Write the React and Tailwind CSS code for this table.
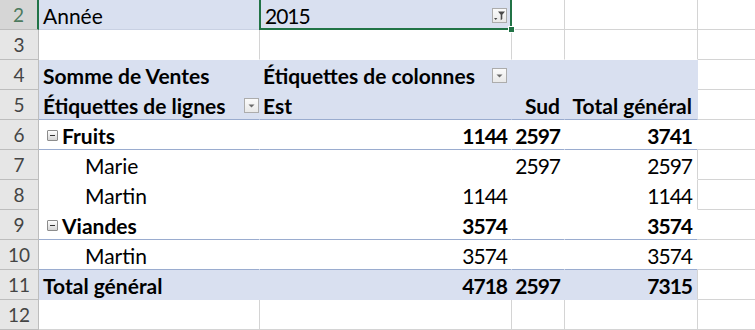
const FONT = { fontFamily: 'Lato, "Liberation Sans", sans-serif' }

function DropButton() {
  return (
    <div className="grid h-[15px] w-[15px] shrink-0 place-items-center border border-[#acacac] bg-gradient-to-b from-[#fbfbfb] to-[#e9e9e9]">
      <svg width="9" height="6" viewBox="0 0 9 6">
        <path d="M1.5 1.5h6l-3 3z" fill="#6b6b6b" />
      </svg>
    </div>
  )
}

function FilterButton() {
  return (
    <div className="grid h-[15px] w-[15px] shrink-0 place-items-center border border-[#acacac] bg-gradient-to-b from-[#fbfbfb] to-[#e9e9e9]">
      <svg width="13" height="13" viewBox="0 0 13 13">
        <path d="M5 2.5h7l-2.7 3.2v4.3l-1.6 1.3v-5.6z" fill="#4a4a4a" />
        <path d="M1 9h3.4l-1.7 2z" fill="#4a4a4a" />
      </svg>
    </div>
  )
}

function Collapse() {
  return (
    <div className="mr-[4px] grid h-[11px] w-[11px] shrink-0 place-items-center rounded-[1px] border border-[#8c8c8c] bg-gradient-to-b from-[#ffffff] to-[#d6d6d6]">
      <div className="h-[1px] w-[5px] bg-[#333]" />
    </div>
  )
}

function Row({ n, sel, children }) {
  return (
    <div className="flex h-[30px]">
      {sel ? (
        <div className="flex w-[39px] shrink-0 items-center justify-center border-b border-r-2 border-b-[#bdbdbd] border-r-[#217346] bg-[#d6d6d6] pt-[2px] text-[19px] text-[#4d7a5e]">{n}</div>
      ) : (
        <div className="flex w-[39px] shrink-0 items-center justify-center border-b border-r border-[#bdbdbd] bg-[#e6e6e6] pt-[2px] text-[19px] text-[#444]">{n}</div>
      )}
      {children}
    </div>
  )
}

// widths: A 221, B 252, C 53, D 133, E rest
const A = 'flex w-[221px] shrink-0 items-center border-b border-r pl-[4px] pt-[2px]'
const B = 'flex w-[252px] shrink-0 items-center border-b border-r pl-[3px] pr-[4px] pt-[2px]'
const C = 'flex w-[53px] shrink-0 items-center justify-end border-b border-r pr-[4px] pt-[2px]'
const D = 'flex w-[133px] shrink-0 items-center justify-end border-b border-r pr-[5px] pt-[2px]'
const E = 'flex-1 border-b border-[#d4d4d4]'

const GRID = 'border-[#d4d4d4] bg-white'
const HEAD = 'border-transparent bg-[#d9e0f0]'
const BODY = 'border-transparent bg-white'
const SEP = 'border-r-transparent border-b-[#9aaccf] bg-white'
const NUM = 'tracking-[-1px]'

function BodyRow({ n, label, bold, indent, sep, est, sud, total }) {
  const rowCls = sep ? SEP : BODY
  const w = bold ? 'font-bold' : ''
  return (
    <Row n={n}>
      <div className={`${A} ${rowCls} ${w}`}>
        {indent ? <span className="pl-[42px]">{label}</span> : (<><span className="ml-[4px]"><Collapse /></span><span>{label}</span></>)}
      </div>
      <div className={`${B} ${rowCls} ${w} ${NUM} justify-end`}>{est}</div>
      <div className={`${C} ${rowCls} ${w} ${NUM}`}>{sud}</div>
      <div className={`${D} ${rowCls} ${w} ${NUM} border-r-[#d4d4d4]`}>{total}</div>
      <div className={E} />
    </Row>
  )
}

export default function App() {
  return (
    <div className="relative h-[330px] w-[755px] overflow-hidden bg-white text-[21px] text-black" style={FONT}>
      <Row n="2" sel>
        <div className={`${A} border-b-[#c9d1e3] border-r-transparent bg-[#d9e0f0]`}>Année</div>
        <div className={`${B} border-transparent bg-[#d9e0f0] justify-between pl-[5px] pr-[2px]`}>
          <span className={NUM}>2015</span>
          <FilterButton />
        </div>
        <div className={`${C} ${GRID}`} />
        <div className={`${D} ${GRID}`} />
        <div className={E} />
      </Row>
      <Row n="3">
        <div className={`${A} border-b-transparent border-r-[#d4d4d4]`} />
        <div className={`${B} border-b-transparent border-r-[#d4d4d4]`} />
        <div className={`${C} border-b-transparent border-r-[#d4d4d4]`} />
        <div className={`${D} border-b-transparent border-r-[#d4d4d4]`} />
        <div className={E} />
      </Row>
      <Row n="4">
        <div className={`${A} ${HEAD} font-bold`}>Somme de Ventes</div>
        <div className={`${B} ${HEAD} justify-between pr-[1px] font-bold`}>
          <span>Étiquettes de colonnes</span>
          <DropButton />
        </div>
        <div className={`${C} ${HEAD}`} />
        <div className={`${D} ${HEAD}`} />
        <div className={E} />
      </Row>
      <Row n="5">
        <div className={`${A} border-b-[#9aaccf] border-r-transparent bg-[#d9e0f0] justify-between pr-0 font-bold`}>
          <span>Étiquettes de lignes</span>
          <DropButton />
        </div>
        <div className={`${B} border-b-[#9aaccf] border-r-transparent bg-[#d9e0f0] font-bold`}>Est</div>
        <div className={`${C} border-b-[#9aaccf] border-r-transparent bg-[#d9e0f0] font-bold`}>Sud</div>
        <div className={`${D} border-b-[#9aaccf] border-r-transparent bg-[#d9e0f0] font-bold`}>Total général</div>
        <div className={E} />
      </Row>
      <BodyRow n="6" label="Fruits" bold sep est="1144" sud="2597" total="3741" />
      <BodyRow n="7" label="Marie" indent sud="2597" total="2597" />
      <BodyRow n="8" label="Martin" indent est="1144" total="1144" />
      <BodyRow n="9" label="Viandes" bold sep est="3574" total="3574" />
      <BodyRow n="10" label="Martin" indent sep est="3574" total="3574" />
      <Row n="11">
        <div className={`${A} ${HEAD} font-bold`}>Total général</div>
        <div className={`${B} ${HEAD} ${NUM} justify-end font-bold`}>4718</div>
        <div className={`${C} ${HEAD} ${NUM} font-bold`}>2597</div>
        <div className={`${D} ${NUM} border-b-transparent border-r-[#d4d4d4] bg-[#d9e0f0] font-bold`}>7315</div>
        <div className={E} />
      </Row>
      <Row n="12">
        <div className={`${A} ${GRID}`} />
        <div className={`${B} ${GRID}`} />
        <div className={`${C} ${GRID}`} />
        <div className={`${D} ${GRID}`} />
        <div className={E} />
      </Row>

      {/* active cell B2 selection */}
      <div className="pointer-events-none absolute left-[259px] top-[-10px] h-[40px] w-[253px] border-2 border-[#217346]" />
      <div className="pointer-events-none absolute left-[508px] top-[26px] h-[7px] w-[7px] border border-white bg-[#217346]" />
    </div>
  )
}
